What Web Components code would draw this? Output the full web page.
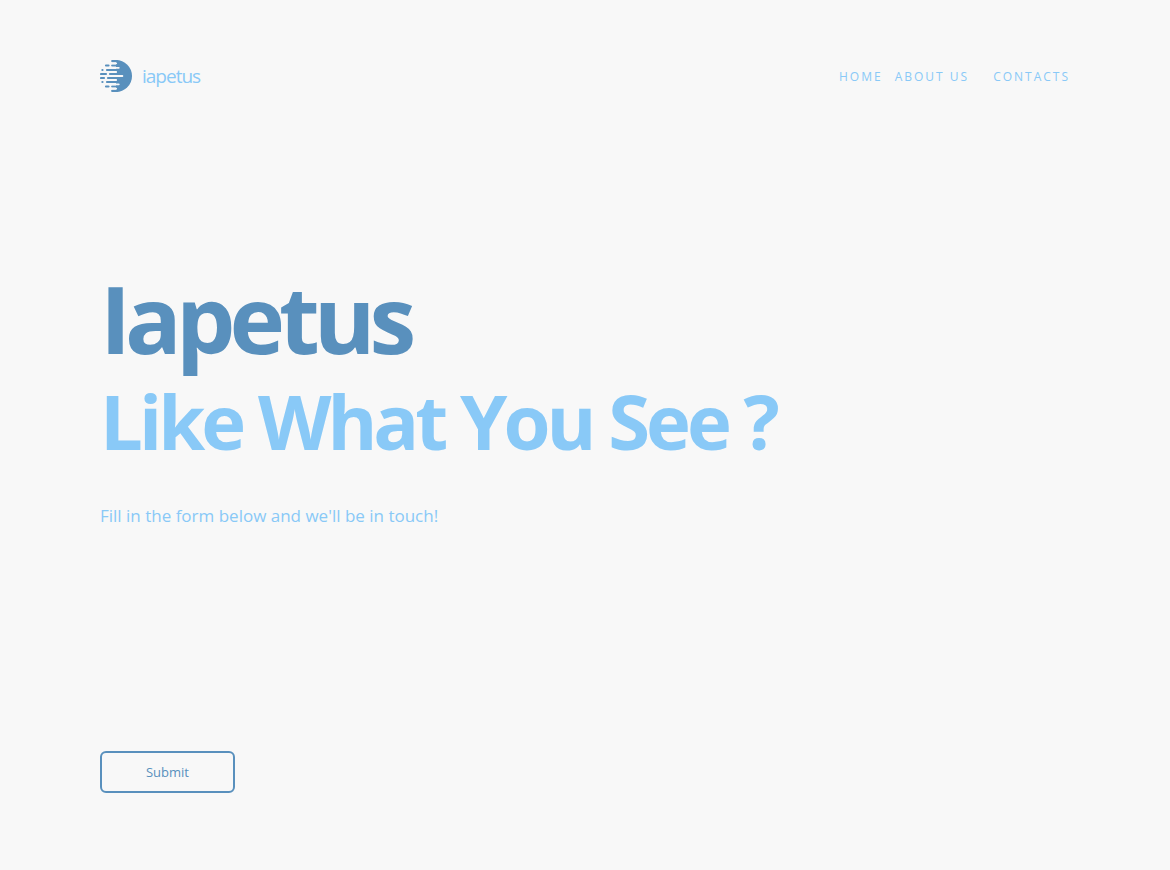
<!DOCTYPE html>
<html lang="en">
<head>
<meta charset="utf-8">
<meta name="viewport" content="width=device-width, initial-scale=1">
<title>Iapetus</title>
<style>
  :root { --deep: #5990bd; --sky: #89c9f7; --paper: #f8f8f8; }
  body { margin: 0; background: var(--paper); color: var(--sky); font-family: "Segoe UI", "Open Sans", "Noto Sans", sans-serif; }
</style>
</head>
<body>
<contact-page>
  <site-header slot="header">
    <brand-logo slot="brand">iapetus</brand-logo>
    <nav-link href="#home">HOME</nav-link>
    <nav-link href="#about">ABOUT US</nav-link>
    <nav-link class="last" href="#contacts">CONTACTS</nav-link>
  </site-header>
  <hero-intro>
    <span slot="title">Iapetus</span>
    <span slot="tagline">Like What You See ?</span>
    <span slot="lead">Fill in the form below and we'll be in touch!</span>
  </hero-intro>
  <contact-form>Submit</contact-form>
</contact-page>
<script>
  const define = (name, html, setup) => {
    const template = document.createElement('template');
    template.innerHTML = html;
    customElements.define(name, class extends HTMLElement {
      constructor() {
        super();
        this.attachShadow({ mode: 'open' }).append(template.content.cloneNode(true));
      }
      connectedCallback() { if (setup) setup(this); }
    });
  };

  define('contact-page', `
    <style>
      :host { display: block; padding: 60px 100px; }
      main { padding-top: 174px; }
    </style>
    <slot name="header"></slot>
    <main><slot></slot></main>`);

  define('site-header', `
    <style>
      :host { display: block; }
      header { display: flex; justify-content: space-between; align-items: center; height: 32px; }
      nav { display: flex; gap: 12px; padding-top: 2px; }
      ::slotted(.last) { margin-left: 12px; }
    </style>
    <header><slot name="brand"></slot><nav aria-label="Main"><slot></slot></nav></header>`);

  define('brand-logo', `
    <style>
      :host { display: block; }
      a { display: flex; align-items: center; gap: 10px; color: inherit; text-decoration: none; font-size: 19px; line-height: 30px; letter-spacing: -1px; }
      svg { width: 32px; height: 32px; color: var(--deep); }
      .gap { stroke: var(--paper); }
    </style>
    <a href="#home">
      <svg viewBox="0 0 32 32" aria-hidden="true" fill="none" stroke-linecap="round">
        <path d="M16 0a16 16 0 0 1 0 32z" fill="currentColor"/>
        <path stroke="currentColor" stroke-width="2.2" d="M12.2 1.1H17M12.2 5.5H17M7 10H17M10 14H17M8 18H17M7 22H17M12.2 26.5H17M12.2 30.9H17M6 5.5H8.5M2.4 10H2.5M1 14H6M1 18H4M2.4 22H2.5M6 26.5H8.5"/>
        <path class="gap" stroke-width="1.8" d="M11 3.3H16.2M9 7.8H18.8M9 12H16.2M9.5 16H22.4M9 20H16.2M9 24.3H18.8M11 28.7H16.2"/>
      </svg>
      <slot></slot>
    </a>`);

  define('nav-link', `
    <style>
      :host { display: block; }
      a { display: block; color: inherit; text-decoration: none; font-size: 12px; line-height: 16px; letter-spacing: 2px; }
    </style>
    <a><slot></slot></a>`,
    el => el.shadowRoot.querySelector('a').setAttribute('href', el.getAttribute('href')));

  define('hero-intro', `
    <style>
      :host { display: block; }
      h1, h2, p { margin: 0; }
      h1 { color: var(--deep); font-size: 94px; line-height: 104px; letter-spacing: -6px; font-weight: 700; }
      h2 { font-size: 76px; line-height: 102px; letter-spacing: -4px; font-weight: 700; }
      p { margin-top: 32px; font-size: 17px; line-height: 24px; }
    </style>
    <h1><slot name="title"></slot></h1>
    <h2><slot name="tagline"></slot></h2>
    <p><slot name="lead"></slot></p>`);

  define('contact-form', `
    <style>
      :host { display: block; margin-top: 223px; }
      form { margin: 0; }
      button { display: block; box-sizing: border-box; min-width: 135px; height: 42px; border: 2px solid var(--deep); border-radius: 6px; background: transparent; color: var(--deep); font: inherit; font-size: 13px; line-height: 20px; cursor: pointer; }
    </style>
    <form onsubmit="return false"><button type="submit"><slot></slot></button></form>`);
</script>
</body>
</html>
